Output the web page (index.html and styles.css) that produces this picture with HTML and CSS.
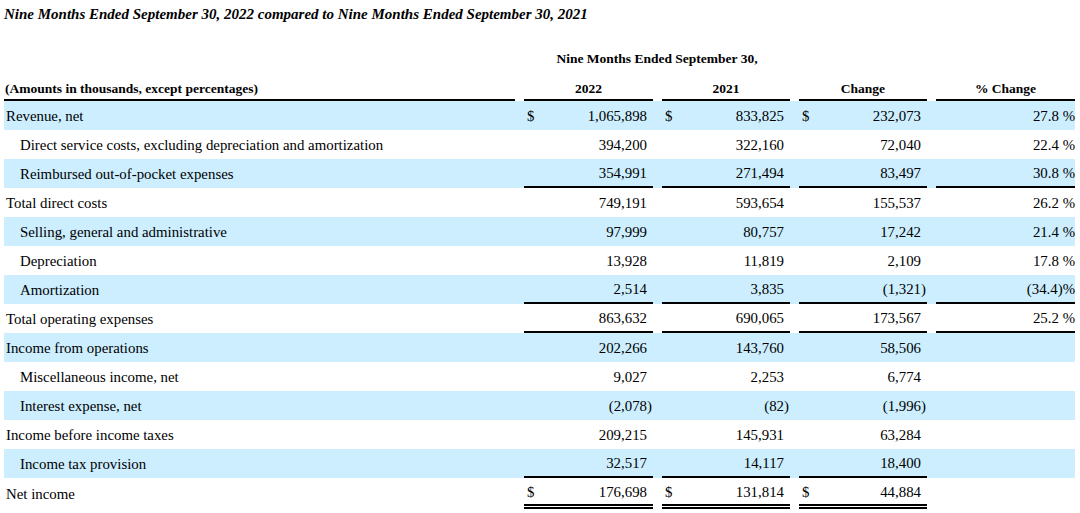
FILE: index.html
```html
<!DOCTYPE html>
<html>
<head>
<meta charset="utf-8">
<link rel="stylesheet" href="styles.css">
</head>
<body>
<h2 class="title">Nine Months Ended September 30, 2022 compared to Nine Months Ended September 30, 2021</h2>
<div class="tbl">
  <div class="row period">
    <div class="cell span">Nine Months Ended September 30,</div>
  </div>
  <div class="row head">
    <div class="cell lbl">(Amounts in thousands, except percentages)</div>
    <div class="cell c">2022</div>
    <div class="cell c">2021</div>
    <div class="cell c">Change</div>
    <div class="cell c">% Change</div>
  </div>

  <div class="row blue">
    <div class="cell lbl">Revenue, net</div>
    <div class="cell num"><span>$</span><span>1,065,898</span></div>
    <div class="cell num"><span>$</span><span>833,825</span></div>
    <div class="cell num"><span>$</span><span>232,073</span></div>
    <div class="cell pct">27.8 %</div>
  </div>
  <div class="row">
    <div class="cell lbl ind">Direct service costs, excluding depreciation and amortization</div>
    <div class="cell num"><span>394,200</span></div>
    <div class="cell num"><span>322,160</span></div>
    <div class="cell num"><span>72,040</span></div>
    <div class="cell pct">22.4 %</div>
  </div>
  <div class="row blue">
    <div class="cell lbl ind">Reimbursed out-of-pocket expenses</div>
    <div class="cell num ul"><span>354,991</span></div>
    <div class="cell num ul"><span>271,494</span></div>
    <div class="cell num ul"><span>83,497</span></div>
    <div class="cell pct ul">30.8 %</div>
  </div>
  <div class="row">
    <div class="cell lbl">Total direct costs</div>
    <div class="cell num"><span>749,191</span></div>
    <div class="cell num"><span>593,654</span></div>
    <div class="cell num"><span>155,537</span></div>
    <div class="cell pct">26.2 %</div>
  </div>
  <div class="row blue">
    <div class="cell lbl ind">Selling, general and administrative</div>
    <div class="cell num"><span>97,999</span></div>
    <div class="cell num"><span>80,757</span></div>
    <div class="cell num"><span>17,242</span></div>
    <div class="cell pct">21.4 %</div>
  </div>
  <div class="row">
    <div class="cell lbl ind">Depreciation</div>
    <div class="cell num"><span>13,928</span></div>
    <div class="cell num"><span>11,819</span></div>
    <div class="cell num"><span>2,109</span></div>
    <div class="cell pct">17.8 %</div>
  </div>
  <div class="row blue">
    <div class="cell lbl ind">Amortization</div>
    <div class="cell num ul"><span>2,514</span></div>
    <div class="cell num ul"><span>3,835</span></div>
    <div class="cell num ul"><span>(1,321<span class="paren">)</span></span></div>
    <div class="cell pct ul">(34.4)%</div>
  </div>
  <div class="row">
    <div class="cell lbl">Total operating expenses</div>
    <div class="cell num ul"><span>863,632</span></div>
    <div class="cell num ul"><span>690,065</span></div>
    <div class="cell num ul"><span>173,567</span></div>
    <div class="cell pct ul">25.2 %</div>
  </div>
  <div class="row blue">
    <div class="cell lbl">Income from operations</div>
    <div class="cell num"><span>202,266</span></div>
    <div class="cell num"><span>143,760</span></div>
    <div class="cell num"><span>58,506</span></div>
    <div class="cell pct"></div>
  </div>
  <div class="row">
    <div class="cell lbl ind">Miscellaneous income, net</div>
    <div class="cell num"><span>9,027</span></div>
    <div class="cell num"><span>2,253</span></div>
    <div class="cell num"><span>6,774</span></div>
    <div class="cell pct"></div>
  </div>
  <div class="row blue">
    <div class="cell lbl ind">Interest expense, net</div>
    <div class="cell num"><span>(2,078<span class="paren">)</span></span></div>
    <div class="cell num"><span>(82<span class="paren">)</span></span></div>
    <div class="cell num"><span>(1,996<span class="paren">)</span></span></div>
    <div class="cell pct"></div>
  </div>
  <div class="row">
    <div class="cell lbl">Income before income taxes</div>
    <div class="cell num"><span>209,215</span></div>
    <div class="cell num"><span>145,931</span></div>
    <div class="cell num"><span>63,284</span></div>
    <div class="cell pct"></div>
  </div>
  <div class="row blue">
    <div class="cell lbl ind">Income tax provision</div>
    <div class="cell num ul"><span>32,517</span></div>
    <div class="cell num ul"><span>14,117</span></div>
    <div class="cell num ul"><span>18,400</span></div>
    <div class="cell pct"></div>
  </div>
  <div class="row last">
    <div class="cell lbl">Net income</div>
    <div class="cell num dbl"><span>$</span><span>176,698</span></div>
    <div class="cell num dbl"><span>$</span><span>131,814</span></div>
    <div class="cell num dbl"><span>$</span><span>44,884</span></div>
    <div class="cell pct"></div>
  </div>
</div>
</body>
</html>
```

FILE: styles.css
```css
html, body {
  margin: 0;
  padding: 0;
  background: #ffffff;
}
body {
  font-family: "Liberation Serif", "Times New Roman", serif;
  color: #000000;
  font-size: 14.85px;
}
.title {
  margin: 0;
  padding: 5px 0 0 4px;
  height: 23px;
  font-size: 15px;
  font-weight: bold;
  font-style: italic;
  line-height: 18px;
}
.tbl {
  margin-left: 4px;
  width: 1071px;
}
.row {
  display: grid;
  grid-template-columns: 511px 129px 128px 128px 139px;
  column-gap: 9px;
  height: 29px;
}
.row.blue {
  background: #cceeff;
}
.cell {
  box-sizing: border-box;
  height: 100%;
  display: flex;
  align-items: center;
  white-space: nowrap;
  line-height: 1;
}
.row.period {
  height: 47px;
}
.row.period .span {
  grid-column: 2 / 4;
  justify-content: center;
  font-weight: bold;
  font-size: 13.5px;
  padding-top: 15px;
}
.row.head {
  height: 26px;
}
.row.head .cell {
  font-weight: bold;
  font-size: 13.5px;
  border-bottom: 2px solid #000;
  padding-top: 3px;
}
.row.head .lbl {
  padding-left: 1px;
}
.row.head .c {
  justify-content: center;
}
.lbl {
  padding-left: 2px;
  padding-top: 2px;
}
.lbl.ind {
  padding-left: 16px;
}
.num {
  justify-content: space-between;
  padding: 2px 6px 0 3px;
}
.num span:only-child {
  margin-left: auto;
}
.paren {
  margin-right: -5px;
}
.pct {
  justify-content: flex-end;
  padding-top: 2px;
}
.ul {
  border-bottom: 2px solid #000;
}
.row.last {
  height: 31px;
}
.dbl {
  border-bottom: 5px double #000;
}
```
